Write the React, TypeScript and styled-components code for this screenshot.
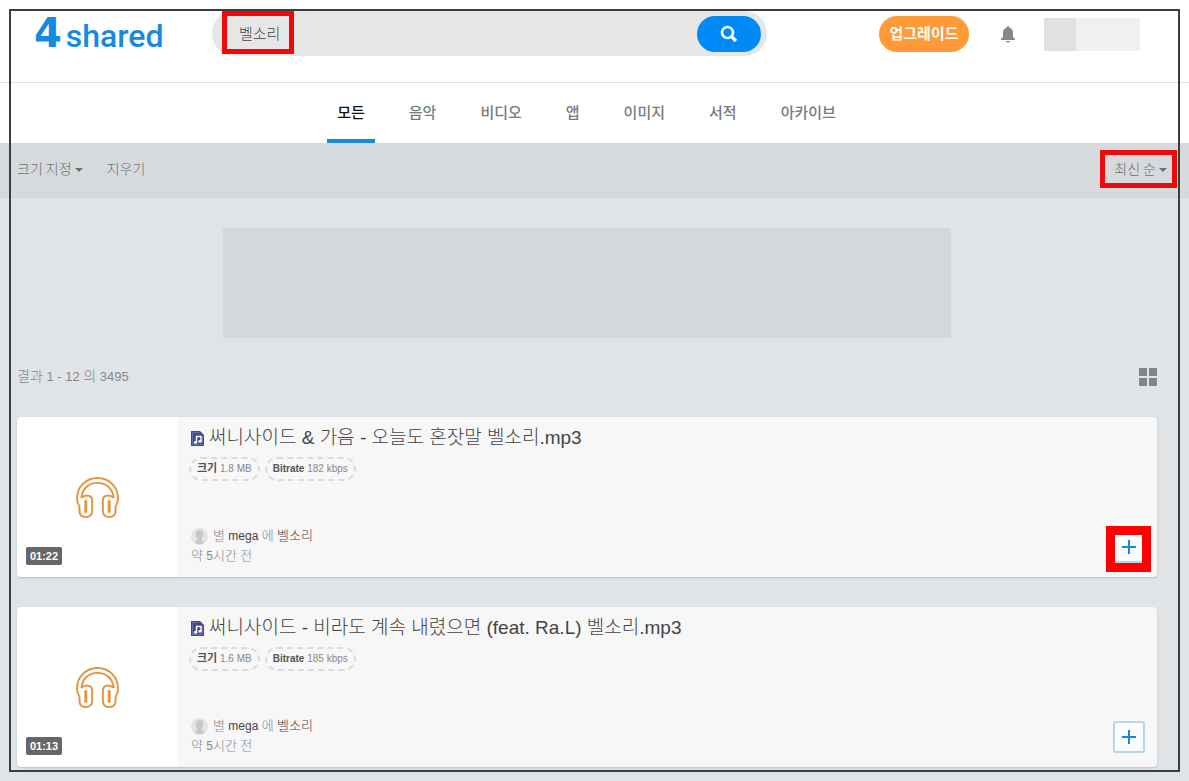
import React from "react";
import styled, { createGlobalStyle, css } from "styled-components";

const GlobalStyle = createGlobalStyle`
  *, *::before, *::after { box-sizing: border-box; }
  body {
    margin: 0;
    background: #e0e4e7;
    color: #85898c;
    font-family: "Liberation Sans", Arial, "Noto Sans CJK KR", sans-serif;
    font-size: 13px;
    line-height: 20px;
  }
  a { color: inherit; text-decoration: none; }
  h2, p, ul { margin: 0; padding: 0; }
  button, input, select { font: inherit; color: inherit; }
`;

const korean = css`
  font-family: "Noto Sans CJK KR", "Liberation Sans", sans-serif;
`;

const Hangul = styled.span<{ $size: number }>`
  ${korean}
  font-size: ${(p) => p.$size}px;
  line-height: 1;
`;

/* Sets Hangul runs in their own size beside the Latin text. */
function Mixed({ text, size }: { text: string; size: number }) {
  return (
    <>
      {text.split(/([가-힣]+)/).map((run, i) =>
        i % 2 ? (
          <Hangul key={i} $size={size}>
            {run}
          </Hangul>
        ) : (
          run
        )
      )}
    </>
  );
}

const Page = styled.div`
  position: relative;
  min-height: 100vh;
  padding-bottom: 14px;
`;

const Frame = styled.div`
  position: absolute;
  inset: 9px;
  border: 2px solid #3b3d3f;
  pointer-events: none;
  z-index: 2;
`;

const Mark = styled.span<{ $inset: string; $width: number }>`
  position: absolute;
  inset: ${(p) => p.$inset};
  border: ${(p) => p.$width}px solid ${(p) => (p.$width > 5 ? "#ff0000" : "#ee0a0a")};
  pointer-events: none;
  z-index: 3;
`;

const WordMark = styled(Mark)`
  width: 72px;
`;

const Header = styled.header`
  display: flex;
  align-items: flex-start;
  height: 83px;
  padding: 11px 49px 0 34px;
  background: #fff;
  border-bottom: 1px solid #e2e2e2;
`;

const Logo = styled.a`
  display: flex;
  align-items: baseline;
  width: 178px;
  color: #178ae0;
  font: 500 32px/44px Roboto, sans-serif;
`;

const LogoFour = styled.span`
  margin-right: 4px;
  font: bold 40px/44px "DejaVu Sans", sans-serif;
`;

const Search = styled.form`
  position: relative;
  display: flex;
  flex: 1;
  height: 45px;
  padding: 5px 6px 4px 27px;
  border-radius: 23px;
  background: #e6e6e6;
`;

const SearchInput = styled.input`
  ${korean}
  flex: 1;
  min-width: 0;
  padding: 0 0 2px;
  border: 0;
  outline: 0;
  background: none;
  color: #444;
  font-size: 15px;
  font-weight: 300;
`;

const SearchButton = styled.button`
  display: grid;
  place-items: center;
  width: 64px;
  height: 36px;
  border: 0;
  border-radius: 18px;
  background: #008af7;
`;

const Account = styled.div`
  display: flex;
  align-items: center;
  height: 36px;
  margin: 5px 0 0 112px;
`;

const Upgrade = styled.button`
  ${korean}
  width: 90px;
  height: 36px;
  padding: 0 0 2px;
  border: 0;
  border-radius: 18px;
  background: #ff9a36;
  color: #fff;
  font-size: 15px;
  font-weight: 700;
`;

const BellButton = styled.button`
  display: flex;
  margin: 0 29px 0 32px;
  padding: 0;
  border: 0;
  background: none;
`;

const User = styled.div`
  display: flex;
  width: 96px;
  height: 33px;
  background: #f0f0f0;
  &::before {
    content: "";
    width: 32px;
    background: #e1e1e1;
  }
`;

const Tabs = styled.nav`
  display: flex;
  justify-content: center;
  gap: 24px;
  height: 60px;
  padding-right: 16px;
  background: #fff;
`;

const Tab = styled.a<{ $active?: boolean }>`
  ${korean}
  height: 60px;
  padding: 0 10px;
  border-bottom: 4px solid ${(p) => (p.$active ? "#188ae0" : "transparent")};
  color: ${(p) => (p.$active ? "#111" : "#777c7f")};
  font-size: 15px;
  font-weight: 500;
  line-height: 58px;
`;

const Filters = styled.div`
  display: flex;
  align-items: center;
  height: 55px;
  padding: 0 22px 4px 17px;
  border-bottom: 1px solid #d2d6d9;
  background: #d6dadd;
  color: #6c7073;
`;

const Picker = styled.label<{ $end?: boolean }>`
  position: relative;
  display: flex;
  margin-left: ${(p) => (p.$end ? "auto" : "0")};
  &::after {
    content: "";
    position: absolute;
    right: 0;
    top: 10px;
    border: 4px solid transparent;
    border-top-color: currentColor;
    pointer-events: none;
  }
`;

const Select = styled.select`
  ${korean}
  appearance: none;
  field-sizing: content;
  padding: 0 11px 0 0;
  border: 0;
  outline: 0;
  background: none;
  font-size: 14px;
  font-weight: 300;
  line-height: 20px;
`;

const Clear = styled.button`
  ${korean}
  margin-left: 24px;
  padding: 0;
  border: 0;
  background: none;
  font-size: 14px;
  font-weight: 300;
`;

const Main = styled.main`
  padding: 30px 32px 0 17px;
`;

const Banner = styled.div`
  max-width: 728px;
  height: 110px;
  margin: 0 auto;
  background: #d4d8db;
`;

const Summary = styled.div`
  display: flex;
  align-items: center;
  justify-content: space-between;
  height: 77px;
  margin-bottom: 2px;
  font-weight: 300;
`;

const GridButton = styled.button`
  display: flex;
  padding: 0;
  border: 0;
  background: none;
`;

const Results = styled.ul`
  display: grid;
  gap: 30px;
  list-style: none;
`;

const Card = styled.li`
  display: flex;
  height: 160px;
  border-radius: 4px;
  background: #f7f7f7;
  box-shadow: 0 1px 2px #b9bec3;
`;

const Cover = styled.div`
  position: relative;
  display: grid;
  place-items: center;
  flex: 0 0 160px;
  border-radius: 4px 0 0 4px;
  background: #fff;
`;

const Duration = styled.span`
  position: absolute;
  left: 9px;
  bottom: 12px;
  width: 36px;
  border-radius: 2px;
  background: #666;
  color: #fff;
  font-size: 11px;
  font-weight: 700;
  line-height: 18px;
  text-align: center;
`;

const Details = styled.div`
  flex: 1;
  min-width: 0;
  display: flex;
  flex-direction: column;
  padding: 8px 12px 11px 14px;
`;

const Title = styled.h2`
  display: flex;
  align-items: center;
  gap: 5px;
  color: #444;
  font-size: 19px;
  font-weight: 300;
  line-height: 26px;
  white-space: pre;
`;

const Chips = styled.div`
  display: flex;
  gap: 5px;
  margin: 6px 0 0 -2px;
`;

const Chip = styled.span`
  height: 24px;
  padding: 0 6px;
  border: 2px dashed #dcdcdc;
  border-radius: 12px;
  font-size: 10px;
  line-height: 20px;
  b { color: #555; }
`;

const Bottom = styled.div`
  display: flex;
  align-items: flex-end;
  justify-content: space-between;
  margin-top: auto;
`;

const Meta = styled.div`
  font-size: 12px;
  font-weight: 300;
`;

const Owner = styled.p`
  display: flex;
  align-items: center;
  gap: 5px;
  a { color: #444; }
`;

const AddWrap = styled.div`
  position: relative;
  margin-bottom: 3px;
`;

const AddButton = styled.button`
  display: grid;
  place-items: center;
  width: 32px;
  height: 32px;
  padding: 0;
  border: 2px solid #b5d6eb;
  border-radius: 3px;
  background: #fafcfd;
`;

const SearchIcon = () => (
  <svg width="18" height="18" viewBox="0 0 18 18" fill="none" stroke="#fff" aria-hidden>
    <circle cx="7.500" cy="7.500" r="5.500" strokeWidth="2.600" />
    <path d="M11.500 11.500 16 16" strokeWidth="3.200" />
  </svg>
);

const BellIcon = () => (
  <svg width="14" height="17" viewBox="0 0 14 17" fill="#85878a" aria-hidden>
    <path d="M7 0.3c.9 0 1.3.5 1.3 1.3C10.500 2.200 12 4 12 6.500v4.200L14 13v1H0v-1l2-2.300V6.500C2 4 3.500 2.200 5.700 1.600 5.700.8 6.100.3 7 .3ZM4.600 15h4.800c-.3.900-1.100 1.400-2.400 1.400S4.900 15.900 4.600 15Z" />
  </svg>
);

const GridIcon = () => (
  <svg width="18" height="18" viewBox="0 0 18 18" fill="#80858d" aria-hidden>
    <path d="M0 0h8v8H0zM10 0h8v8h-8zM0 10h8v8H0zM10 10h8v8h-8z" />
  </svg>
);

const HeadphonesIcon = () => (
  <svg width="43" height="41" viewBox="0 0 44 42" fill="none" stroke="#e39540" strokeWidth="2" strokeLinejoin="round" aria-hidden>
    <path d="M3.500 30C1.800 28 1 25.500 1 22 1 10 10 1 22 1s21 9 21 21c0 3.500-.8 6-2.500 8" />
    <path d="M5.500 21.500C6.200 12 13 6 22 6s15.800 6 16.500 15.500" />
    <path d="M5.500 21.500C7 19.700 9 19 11 19c3.500 0 5.500 2 5.500 5.500V34c0 4.500-2.500 7-6.500 7s-6.500-2.500-6.500-7v-4" />
    <path d="M38.500 21.500C37 19.700 35 19 33 19c-3.500 0-5.500 2-5.500 5.500V34c0 4.500 2.500 7 6.500 7s6.500-2.500 6.500-7v-4" />
    <path d="M10 25v10.500M34 25v10.500" strokeWidth="3" strokeLinecap="round" />
  </svg>
);

const FileIcon = () => (
  <svg width="13" height="15" viewBox="0 0 13 15" aria-hidden>
    <path d="M0 0h9l4 4v11H0z" fill="#43498a" />
    <path d="M8.500 1.500h-7v12h10V5" fill="none" stroke="#8087b8" strokeWidth=".6" />
    <path d="M5.500 12V5.500h4.500V10.500" fill="none" stroke="#fff" strokeWidth="1.400" />
    <ellipse cx="4.600" cy="11.400" rx="1.700" ry="1.400" fill="#fff" />
    <ellipse cx="9" cy="10.400" rx="1.600" ry="1.400" fill="#fff" />
  </svg>
);

const AvatarIcon = () => (
  <svg width="17" height="17" viewBox="0 0 17 17" aria-hidden>
    <circle cx="8.500" cy="8.500" r="8.500" fill="#e4e4e4" />
    <path d="M8.500 2c2.500 0 3.700 1.700 3.700 4.200 0 1.900-.7 3.400-1.700 4.300v1.600l3 1.600c-1.500 1.700-3 2.500-5 2.500s-3.500-.8-5-2.500l3-1.600v-1.600C5.500 9.600 4.800 8.100 4.800 6.200 4.800 3.700 6 2 8.500 2Z" fill="#c6c8c9" />
  </svg>
);

const PlusIcon = () => (
  <svg width="14" height="14" viewBox="0 0 14 14" stroke="#1688d4" strokeWidth="2" aria-hidden>
    <path d="M7 0v14M0 7h14" />
  </svg>
);

const tabs = ["모든", "음악", "비디오", "앱", "이미지", "서적", "아카이브"];

const files = [
  { title: "써니사이드 & 가음 - 오늘도 혼잣말 벨소리.mp3", size: "1.8 MB", bitrate: "182 kbps", time: "01:22", marked: true },
  { title: "써니사이드 - 비라도 계속 내렸으면 (feat. Ra.L) 벨소리.mp3", size: "1.6 MB", bitrate: "185 kbps", time: "01:13", marked: false },
];

export default function App() {
  return (
    <Page>
      <GlobalStyle />
      <Header>
        <Logo href="#">
          <LogoFour>4</LogoFour>shared
        </Logo>
        <Search onSubmit={(e) => e.preventDefault()}>
          <SearchInput aria-label="검색어" defaultValue="벨소리" />
          <SearchButton aria-label="검색">
            <SearchIcon />
          </SearchButton>
          <WordMark $inset="0 auto 2px 10px" $width={5} />
        </Search>
        <Account>
          <Upgrade type="button">업그레이드</Upgrade>
          <BellButton type="button" aria-label="알림">
            <BellIcon />
          </BellButton>
          <User />
        </Account>
      </Header>
      <Tabs>
        {tabs.map((t, i) => (
          <Tab key={t} href="#" $active={i === 0}>
            {t}
          </Tab>
        ))}
      </Tabs>
      <Filters>
        <Picker>
          <Select aria-label="크기 지정">
            <option>크기 지정</option>
          </Select>
        </Picker>
        <Clear type="button">지우기</Clear>
        <Picker $end>
          <Select aria-label="정렬">
            <option>최신 순</option>
          </Select>
          <Mark $inset="-8px -10px -10px -14px" $width={5} />
        </Picker>
      </Filters>
      <Main>
        <Banner />
        <Summary>
          <p>
            <Mixed text="결과 1 - 12 의 3495" size={14} />
          </p>
          <GridButton type="button" aria-label="격자 보기">
            <GridIcon />
          </GridButton>
        </Summary>
        <Results>
          {files.map((f) => (
            <Card key={f.title}>
              <Cover>
                <HeadphonesIcon />
                <Duration>{f.time}</Duration>
              </Cover>
              <Details>
                <Title>
                  <FileIcon />
                  <a href="#">
                    <Mixed text={f.title} size={19} />
                  </a>
                </Title>
                <Chips>
                  <Chip>
                    <b>
                      <Mixed text="크기" size={11} />
                    </b>{" "}
                    {f.size}
                  </Chip>
                  <Chip>
                    <b>Bitrate</b> {f.bitrate}
                  </Chip>
                </Chips>
                <Bottom>
                  <Meta>
                    <Owner>
                      <AvatarIcon />
                      <span>
                        <Mixed text="별 " size={13} />
                        <a href="#">mega</a>
                        <Mixed text=" 에 " size={13} />
                        <a href="#">
                          <Mixed text="벨소리" size={13} />
                        </a>
                      </span>
                    </Owner>
                    <p>
                      <Mixed text="약 5시간 전" size={13} />
                    </p>
                  </Meta>
                  <AddWrap>
                    <AddButton type="button" aria-label="추가">
                      <PlusIcon />
                    </AddButton>
                    {f.marked && <Mark $inset="-5px -6px -9px -7px" $width={9} />}
                  </AddWrap>
                </Bottom>
              </Details>
            </Card>
          ))}
        </Results>
      </Main>
      <Frame />
    </Page>
  );
}
